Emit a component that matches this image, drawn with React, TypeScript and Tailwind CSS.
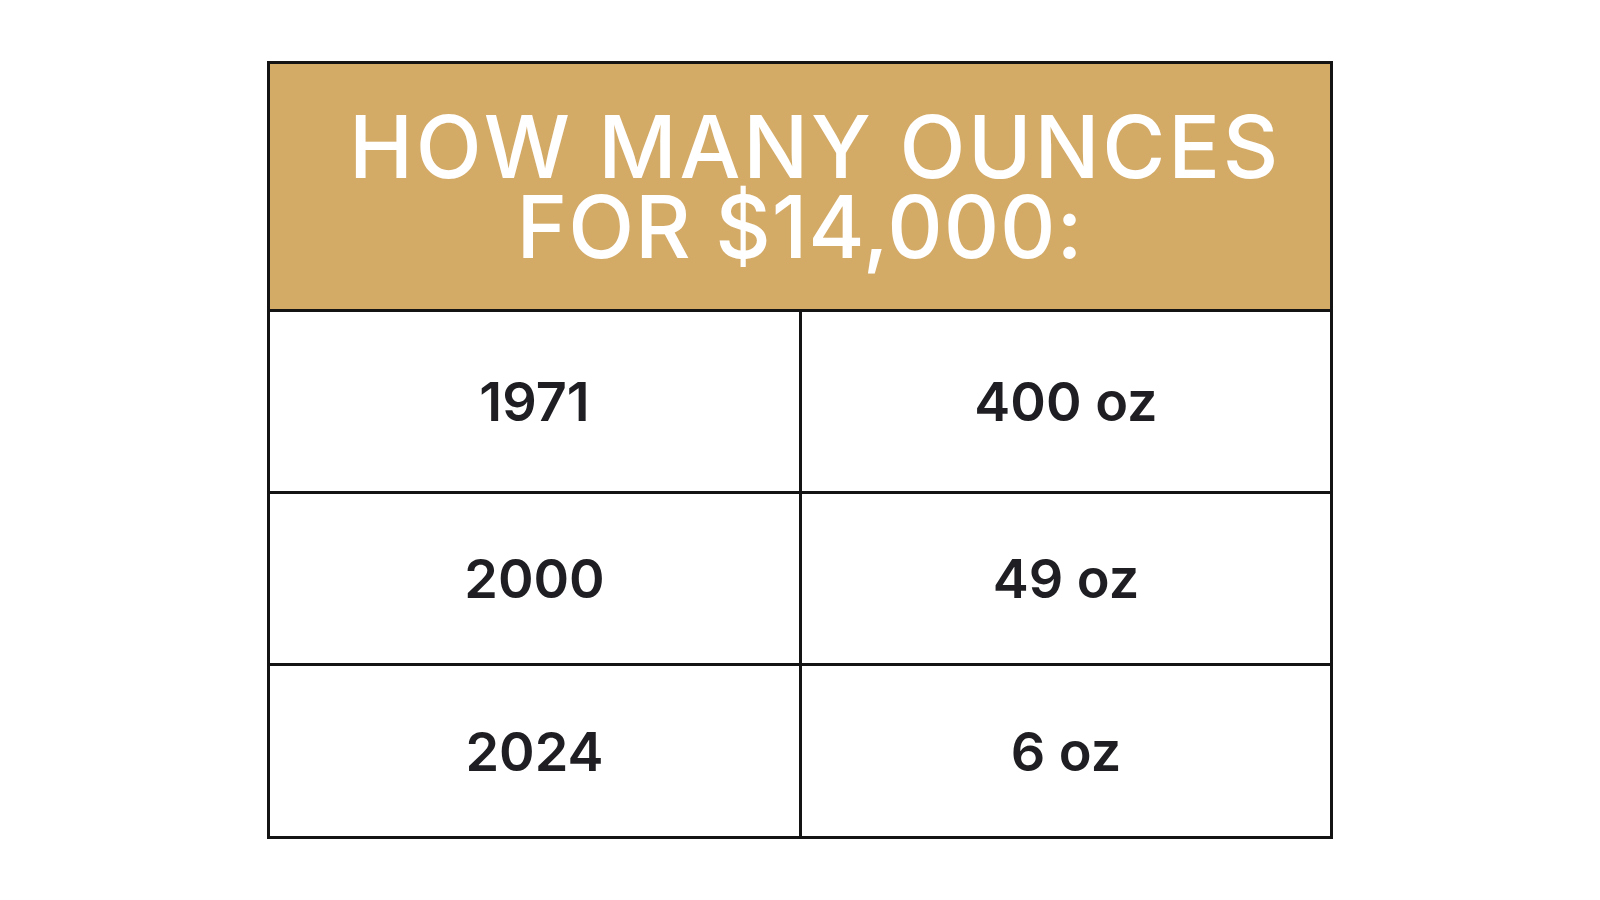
const rows = [
  { year: '1971', oz: '400 oz' },
  { year: '2000', oz: '49 oz' },
  { year: '2024', oz: '6 oz' },
]

export default function App() {
  return (
    <div className="w-[1600px] h-[900px] bg-white pt-[61px] pl-[267px] font-['Inter',sans-serif]">
      <div className="w-[1066px] h-[778px] border-[3px] border-[#141414] flex flex-col">
        {/* header */}
        <div className="h-[248px] bg-[#d4aa67] border-b-[3px] border-[#141414] flex flex-col items-center justify-center text-white font-medium text-[86px] leading-[80px]">
          <div className="pl-[30px] tracking-[0.032em]">HOW MANY OUNCES</div>
          <div className="tracking-[0.01em]">FOR $14,000:</div>
        </div>
        <div className="flex-1 grid grid-cols-[532px_1fr] grid-rows-[182px_172px_1fr] text-[#1f1f23] font-semibold text-[54px]">
          {rows.map((r, i) => (
            <div key={r.year} className="contents">
              <div
                className={`flex items-center justify-center border-r-[3px] border-[#141414] ${
                  i < rows.length - 1 ? 'border-b-[3px]' : ''
                }`}
              >
                {r.year}
              </div>
              <div
                className={`flex items-center justify-center border-[#141414] ${
                  i < rows.length - 1 ? 'border-b-[3px]' : ''
                }`}
              >
                {r.oz}
              </div>
            </div>
          ))}
        </div>
      </div>
    </div>
  )
}
